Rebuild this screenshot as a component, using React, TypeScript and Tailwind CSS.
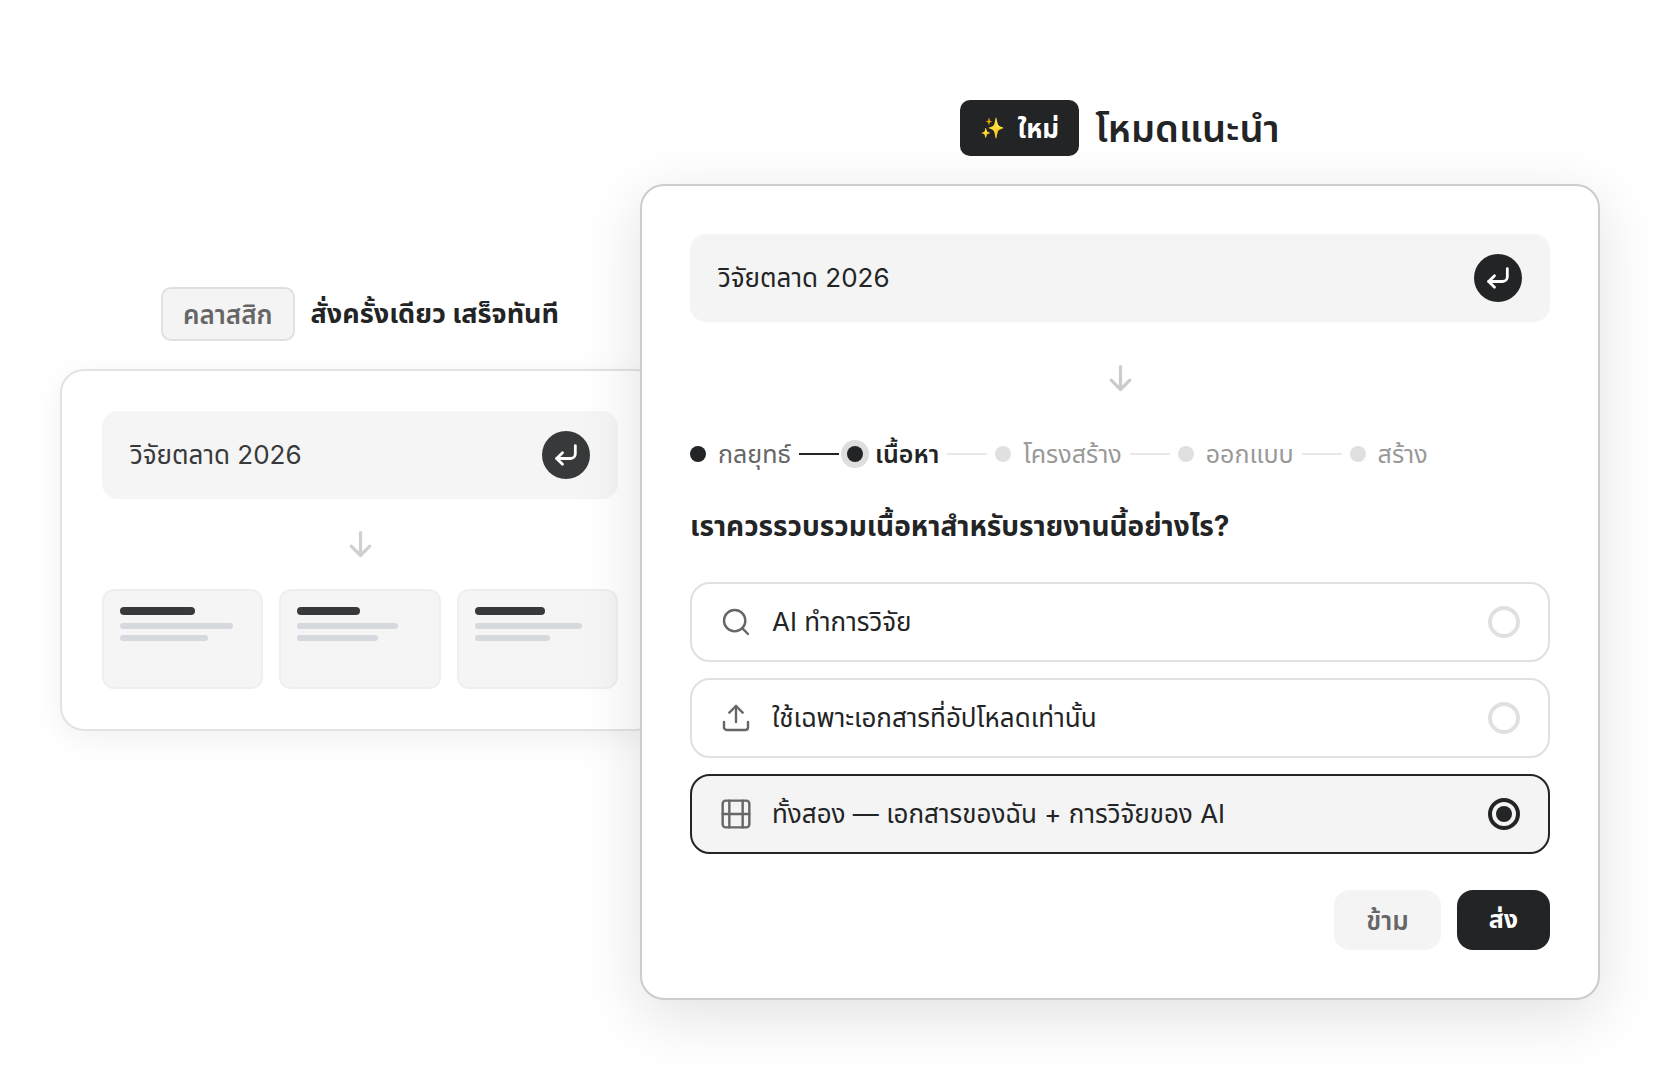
import React, { useState } from 'react';
import { CornerDownLeft, Search, Upload } from 'lucide-react';

const PROMPT = 'วิจัยตลาด 2026';

const thumbs = [
  { title: 'w-[60%]', first: 'w-[90%]', second: 'w-[70%]' },
  { title: 'w-[50%]', first: 'w-[80%]', second: 'w-[64%]' },
  { title: 'w-[56%]', first: 'w-[86%]', second: 'w-[60%]' },
];

const steps = [
  { label: 'กลยุทธ์', state: 'done' },
  { label: 'เนื้อหา', state: 'active' },
  { label: 'โครงสร้าง', state: 'todo' },
  { label: 'ออกแบบ', state: 'todo' },
  { label: 'สร้าง', state: 'todo' },
];

const dotStyles: Record<string, string> = {
  done: 'bg-[#232425]',
  active: 'bg-[#232425] ring-6 ring-[#dedede]',
  todo: 'bg-[#e0e0e0]',
};

const labelStyles: Record<string, string> = {
  done: 'text-[#666666]',
  active: 'font-semibold text-[#232425]',
  todo: 'text-[#999999]',
};

// Film strip without the small side perforations
const FilmIcon: React.FC<{ className?: string }> = ({ className }) => (
  <svg
    className={className}
    width="32"
    height="32"
    viewBox="0 0 24 24"
    fill="none"
    stroke="currentColor"
    strokeWidth="1.8"
    strokeLinecap="round"
    strokeLinejoin="round"
  >
    <rect x="2" y="2" width="20" height="20" rx="2.2" />
    <path d="M7 2v20M17 2v20M2 12h20" />
  </svg>
);

const SearchIcon: React.FC<{ className?: string }> = ({ className }) => (
  <Search size={32} strokeWidth={1.8} className={className} />
);

const UploadIcon: React.FC<{ className?: string }> = ({ className }) => (
  <Upload size={32} strokeWidth={1.8} className={className} />
);

const options = [
  { id: 'research', label: 'AI ทำการวิจัย', Icon: SearchIcon },
  { id: 'upload', label: 'ใช้เฉพาะเอกสารที่อัปโหลดเท่านั้น', Icon: UploadIcon },
  { id: 'both', label: 'ทั้งสอง — เอกสารของฉัน + การวิจัยของ AI', Icon: FilmIcon },
];

const DownArrow: React.FC = () => (
  <svg
    className="mx-auto size-8 text-[#cccccc]"
    viewBox="0 0 32 32"
    fill="none"
    stroke="currentColor"
    strokeWidth="3.2"
    strokeLinecap="round"
    strokeLinejoin="round"
  >
    <path d="M16.5 4.5v23M7.2 18.2l9.3 9.3 9.3-9.3" />
  </svg>
);

const PromptBar: React.FC<{ id: string }> = ({ id }) => (
  <form className="flex h-[88px] items-center rounded-2xl bg-[#f4f4f4] px-7" onSubmit={(e) => e.preventDefault()}>
    <input
      id={id}
      aria-label="คำสั่ง"
      defaultValue={PROMPT}
      className="h-12 min-w-0 flex-1 bg-transparent pt-0.5 text-[26px] text-[#232425] outline-none"
    />
    <button
      type="submit"
      aria-label="ส่งคำสั่ง"
      className="flex size-12 shrink-0 items-center justify-center rounded-full bg-[#232425] text-white"
    >
      <CornerDownLeft size={28} strokeWidth={2.4} />
    </button>
  </form>
);

const ClassicPanel: React.FC = () => (
  <section className="min-w-0 flex-[600] pb-[82px]">
    <div className="mb-7 flex items-center justify-center gap-4">
      <span className="flex h-[54px] items-center rounded-[10px] border-2 border-[#e0e0e0] bg-[#f4f4f4] px-5 text-[26px] font-semibold text-[#666666]">
        คลาสสิก
      </span>
      <h2 className="text-[27px] leading-10 font-bold text-[#232425]">สั่งครั้งเดียว เสร็จทันที</h2>
    </div>
    <div className="rounded-3xl border-2 border-[#e0e0e0] bg-white p-10 opacity-90 shadow-[0_8px_32px_rgba(0,0,0,0.06)]">
      <PromptBar id="classic-prompt" />
      <div className="py-[29px]">
        <DownArrow />
      </div>
      <div className="grid grid-cols-3 gap-4">
        {thumbs.map((thumb) => (
          <div key={thumb.title} className="h-[100px] rounded-xl border-2 border-[#eeeeee] bg-[#f4f4f4] p-4">
            <div className={`mb-2 h-2 rounded-full bg-[#232425] ${thumb.title}`} />
            <div className={`mb-1.5 h-1.5 rounded-full bg-[#d1d5db] ${thumb.first}`} />
            <div className={`h-1.5 rounded-full bg-[#d1d5db] ${thumb.second}`} />
          </div>
        ))}
      </div>
    </div>
  </section>
);

const Stepper: React.FC = () => (
  <ol className="flex h-8 items-center gap-2 text-[25px]">
    {steps.map((step, i) => (
      <li key={step.label} className="flex items-center gap-2">
        {i > 0 && <span className={`h-0.5 w-10 ${i === 1 ? 'bg-[#232425]' : 'bg-[#e8e8e8]'}`} />}
        <span className="flex items-center gap-3">
          <span className={`size-4 rounded-full ${dotStyles[step.state]}`} />
          <span className={`leading-8 whitespace-nowrap ${labelStyles[step.state]}`}>{step.label}</span>
        </span>
      </li>
    ))}
  </ol>
);

const GuidedPanel: React.FC = () => {
  const [selected, setSelected] = useState('both');

  return (
    <section className="relative -ml-5 min-w-0 flex-[960]">
      <div className="mb-7 flex items-center justify-center gap-4">
        <span className="flex h-14 items-center gap-3 rounded-[10px] bg-[#232425] px-5 text-[26px] font-bold text-white">
          <span className="text-xl">✨</span>
          ใหม่
        </span>
        <h2 className="text-[38px] leading-14 font-semibold text-[#232425]">โหมดแนะนำ</h2>
      </div>
      <div className="rounded-3xl border-2 border-[#cccccc] bg-white p-12 shadow-[0_16px_64px_rgba(0,0,0,0.12)]">
        <PromptBar id="guided-prompt" />
        <div className="pt-10 pb-11">
          <DownArrow />
        </div>
        <Stepper />
        <fieldset className="mt-9">
          <legend className="mb-9 text-[28px] leading-10 font-bold text-[#232425]">
            เราควรรวบรวมเนื้อหาสำหรับรายงานนี้อย่างไร?
          </legend>
          <div className="flex flex-col gap-4">
            {options.map(({ id, label, Icon }) => (
              <label
                key={id}
                htmlFor={id}
                className={`flex h-20 items-center gap-5 rounded-[20px] border-2 px-7 ${
                  selected === id ? 'border-[#232425] bg-[#f4f4f4]' : 'border-[#e0e0e0] bg-white'
                }`}
              >
                <Icon className="shrink-0 text-[#666666]" />
                <span className="flex-1 text-[26px] leading-10 text-[#232425]">{label}</span>
                <input
                  id={id}
                  type="radio"
                  name="source"
                  checked={selected === id}
                  onChange={() => setSelected(id)}
                  className="size-8 shrink-0 appearance-none rounded-full border-4 border-[#e0e0e0] bg-clip-content p-1 checked:border-[#232425] checked:bg-[#232425]"
                />
              </label>
            ))}
          </div>
        </fieldset>
        <div className="mt-9 flex justify-end gap-4">
          <button type="button" className="h-[60px] rounded-2xl bg-[#f4f4f4] px-8 text-[26px] font-semibold text-[#666666]">
            ข้าม
          </button>
          <button type="button" className="h-[60px] rounded-2xl bg-[#232425] px-8 text-[25px] font-bold text-white">
            ส่ง
          </button>
        </div>
      </div>
    </section>
  );
};

export default function App() {
  return (
    <main className="flex min-h-screen items-center bg-white pt-5 pr-20 pl-[60px] font-['Inter','Noto_Sans_Thai',sans-serif]">
      <ClassicPanel />
      <GuidedPanel />
    </main>
  );
}
